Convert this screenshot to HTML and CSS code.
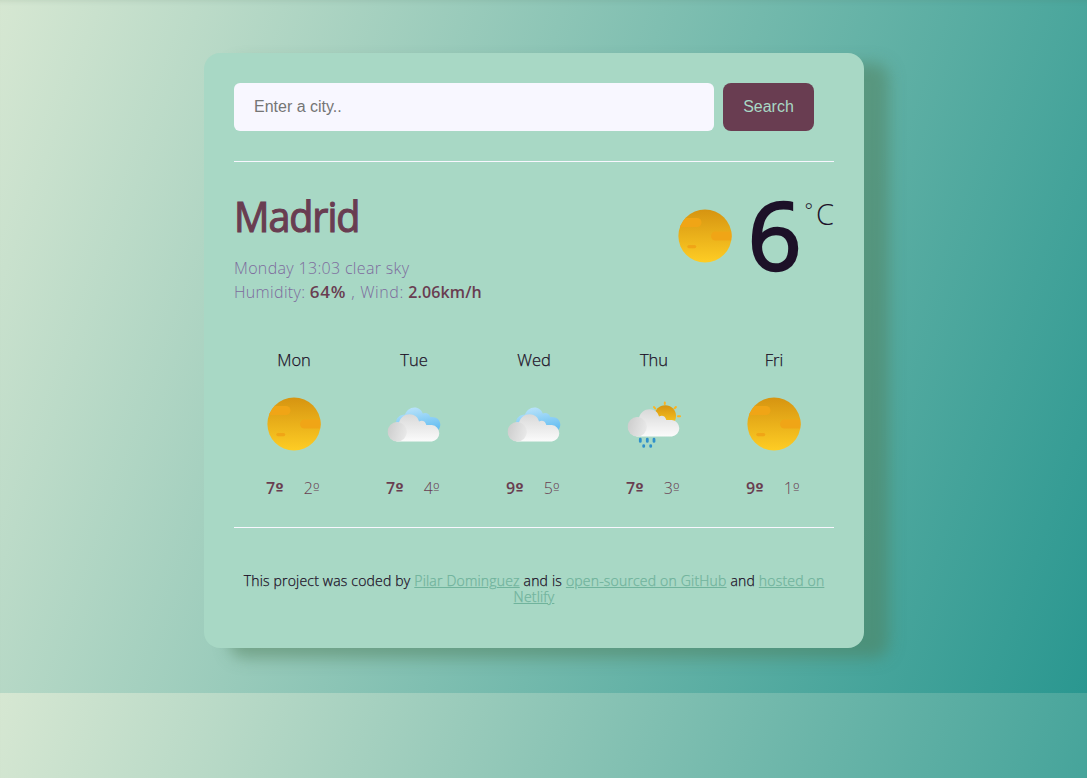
FILE: index.html
```html
<!DOCTYPE html>
<html lang="en">
<head>
<meta charset="utf-8">
<title>Weather</title>
<link rel="stylesheet" href="styles.css">
</head>
<body>
<svg class="defs" width="0" height="0" aria-hidden="true">
  <defs>
    <linearGradient id="sunfill" x1="0" y1="0" x2="0" y2="1"><stop offset="0" stop-color="#d69411"/><stop offset="1" stop-color="#fecd24"/></linearGradient>
    <linearGradient id="cloudfill" x1="0" y1="0" x2="0" y2="1"><stop offset="0" stop-color="#d9d9d9"/><stop offset="1" stop-color="#fbfbfb"/></linearGradient>
    <linearGradient id="puff" x1="0" y1=".3" x2="1" y2=".6"><stop offset="0" stop-color="#cdcdcd"/><stop offset="1" stop-color="#e9e9e9"/></linearGradient>
    <linearGradient id="bluefill" x1="0" y1="0" x2=".3" y2="1"><stop offset="0" stop-color="#c2e6fb"/><stop offset="1" stop-color="#69c0f2"/></linearGradient>
    <clipPath id="disc"><circle cx="32" cy="32" r="26.6"/></clipPath>
    <symbol id="sun" viewBox="0 0 64 64">
      <circle cx="32" cy="32" r="26.6" fill="url(#sunfill)"/>
      <g clip-path="url(#disc)" fill="#f0a516">
        <rect x="-4" y="14" width="32.5" height="9" rx="4.5"/>
        <rect x="38" y="27.5" width="34" height="9" rx="4.5"/>
        <rect x="14.3" y="41" width="9" height="3.2" rx="1.6"/>
      </g>
    </symbol>
    <symbol id="cloud" viewBox="0 0 53 28">
      <path d="M9.5 27.5a9.5 9.5 0 0 1 2-19C13 3.500 17 .3 22 .3c5 0 8.500 3 9.500 7.300 3-2 6.500-.5 7.300 3.400H44.400a8.300 8.300 0 0 1 0 16.500z" fill="url(#cloudfill)"/>
      <circle cx="9.700" cy="17.800" r="9.700" fill="url(#puff)"/>
    </symbol>
    <symbol id="cloudy" viewBox="0 0 64 64">
      <path d="M14 31c0-5 4-8.500 9-8.500 1.500-4 5-7 9.500-7 4 0 7 2.500 8.300 6 3-1.500 6.500 0 7.500 3.500 6-.5 10 2.500 10 7.500 0 4-3 7.500-6 7.500H20z" fill="url(#bluefill)"/>
      <use href="#cloud" x="5.500" y="22" width="53" height="28"/>
    </symbol>
    <symbol id="rain" viewBox="0 0 64 64">
      <g stroke="#fdb51e" stroke-width="2" stroke-linecap="round"><path d="M42.800 10.500v1.500M53.900 15l-1.200 1.200M32 15l1.200 1.500M56 24.300h2"/></g>
      <circle cx="43.200" cy="24" r="10.800" fill="url(#sunfill)"/>
      <use href="#cloud" x="5.500" y="17" width="53" height="28"/>
      <g stroke="#2f90cb" stroke-width="2.800" stroke-linecap="round"><path d="M18.300 47.200v2.200M25.300 47.200v2.200M32 47.200v2.200M21.700 53.600v.8M28.700 53.600v.8"/></g>
    </symbol>
  </defs>
</svg>
<main class="card">
  <form class="search">
    <input class="search-input" type="text" placeholder="Enter a city..">
    <button class="search-button" type="button">Search</button>
  </form>
  <section class="current">
    <div>
      <h1 class="city">Madrid</h1>
      <p class="details"><span class="when">Monday 13:03 clear sky</span><br>Humidity: <strong class="humidity">64%</strong><span class="comma">, Wind:</span> <strong class="wind">2.06km/h</strong></p>
    </div>
    <div class="temperature">
      <svg class="icon"><use href="#sun"/></svg>
      <span class="value">6</span>
      <span class="unit"><span class="degree">°</span>C</span>
    </div>
  </section>
  <section class="forecast">
    <div class="day"><div class="name">Mon</div><svg class="icon"><use href="#sun"/></svg><div class="range"><strong>7<span class="ord">º</span></strong><span>2<span class="ord">º</span></span></div></div>
    <div class="day"><div class="name">Tue</div><svg class="icon"><use href="#cloudy"/></svg><div class="range"><strong>7<span class="ord">º</span></strong><span>4<span class="ord">º</span></span></div></div>
    <div class="day"><div class="name">Wed</div><svg class="icon"><use href="#cloudy"/></svg><div class="range"><strong>9<span class="ord">º</span></strong><span>5<span class="ord">º</span></span></div></div>
    <div class="day"><div class="name">Thu</div><svg class="icon"><use href="#rain"/></svg><div class="range"><strong>7<span class="ord">º</span></strong><span>3<span class="ord">º</span></span></div></div>
    <div class="day"><div class="name">Fri</div><svg class="icon"><use href="#sun"/></svg><div class="range"><strong>9<span class="ord">º</span></strong><span>1<span class="ord">º</span></span></div></div>
  </section>
  <footer class="footer">This project was coded by <a href="#">Pilar Dominguez</a> and is <a href="#">open-sourced on GitHub</a> and <a href="#">hosted on<br>Netlify</a></footer>
</main>
</body>
</html>
```
FILE: styles.css
```css
* { box-sizing: border-box; }
html { background: linear-gradient(109.6deg, #d6e7d2, #2a9790) 0 0 / 100% 693px repeat-y; }
body {
  margin: 0;
  min-height: 778px;
  padding: 53px 0 0 204px;
  font-family: "Open Sans", "Noto Sans", sans-serif;
  font-weight: 300;
  color: #1d1128;
  box-shadow: inset 0 5px 5px -4px rgba(80, 110, 90, .15);
}
.defs { position: absolute; }
.card {
  width: 660px;
  height: 595px;
  padding: 30px;
  border-radius: 16px;
  background: #a8d8c5;
  box-shadow: 25px 10px 15px rgba(80, 125, 90, .5);
}
.search {
  display: flex;
  gap: 9px;
  height: 79px;
  border-bottom: 1px solid #f8f7ff;
}
.search-input, .search-button {
  height: 48px;
  border: 0;
  padding: 0 20px;
  font: 16px "Liberation Sans", sans-serif;
}
.search-input { width: 480px; border-radius: 6px; background: #f8f7ff; }
.search-input::placeholder { color: #757575; }
.search-button { width: 91px; border-radius: 8px; background: #693d51; color: #a8d8c5; }
.current { display: flex; justify-content: space-between; height: 178px; padding-top: 30px; }
.city { margin: 0; font-size: 41.5px; line-height: 48px; font-weight: 400; color: #693d51; letter-spacing: -1.1px; -webkit-text-stroke: 1.2px #693d51; transform: scaleX(.95); transform-origin: 0 50%; }
.details { margin: 16px 0 0; font-size: 16px; line-height: 24px; color: #7d6b9d; white-space: nowrap; letter-spacing: .33px; }
.details strong, .range strong { color: #693d51; font-weight: 600; }
.humidity { font-size: 17px; letter-spacing: .8px; }
.details .wind { letter-spacing: .1px; }
.comma { margin-left: 5px; letter-spacing: .6px; }
.temperature { display: flex; }
.temperature .icon { margin-top: 12px; }
.value { margin: 0 3px 0 11px; font-size: 94px; line-height: 84px; font-weight: 400; -webkit-text-stroke: 2.5px #1d1128; }
.unit { display: flex; font-size: 29px; line-height: 44px; }
.degree { font-size: 20px; line-height: 38px; margin-right: 3px; }
.icon { width: 64px; height: 64px; display: block; }
.forecast { display: grid; grid-template-columns: repeat(5, 120px); height: 188px; border-bottom: 1px solid #f8f7ff; }
.day { display: flex; flex-direction: column; align-items: center; }
.name { font-size: 16.5px; line-height: 24px; margin: 8px 0 20px; font-weight: 300; -webkit-text-stroke: .25px #1d1128; }
.range { display: flex; gap: 20px; margin-top: 20px; padding-right: 2px; font-size: 16px; line-height: 24px; height: 24px; color: #693d51; }
.ord { font-family: "DejaVu Sans", sans-serif; font-size: 15px; line-height: 20px; }
.footer { padding-top: 45px; text-align: center; font-size: 14px; line-height: 16px; font-weight: 300; letter-spacing: .19px; -webkit-text-stroke: .25px; }
.footer a { color: #70b39c; }
```
